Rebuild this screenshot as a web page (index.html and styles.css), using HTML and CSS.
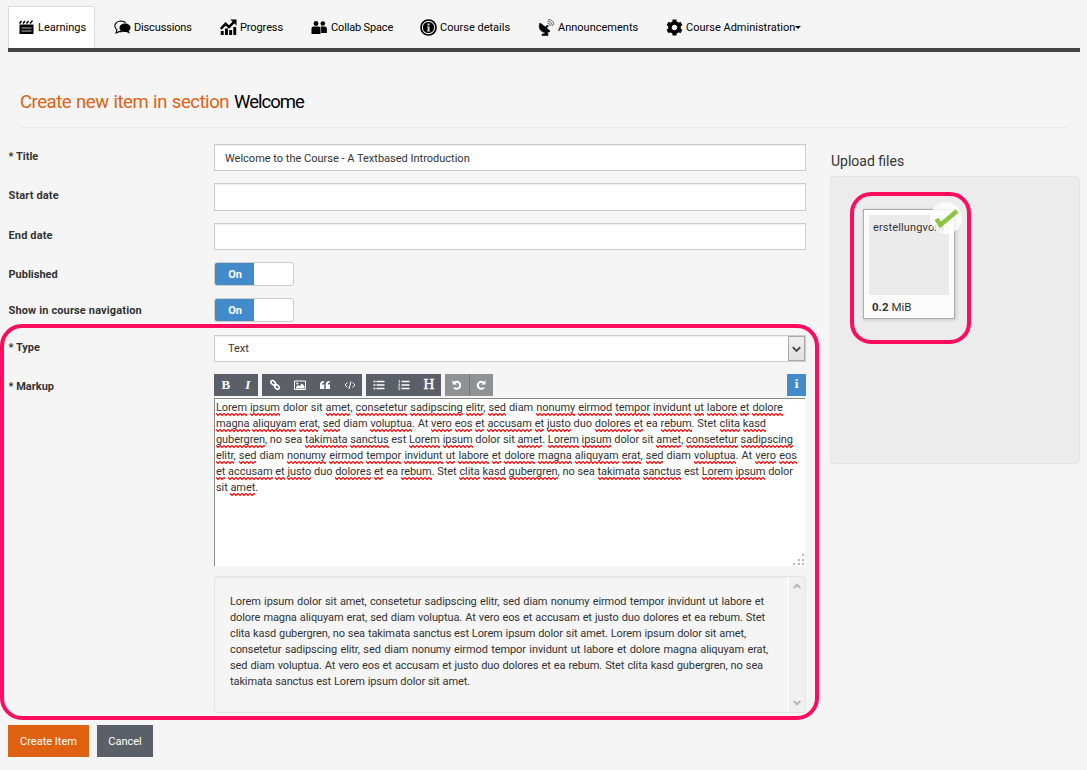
FILE: index.html
```html
<!DOCTYPE html>
<html lang="en">
<head>
<meta charset="utf-8">
<title>Create new item</title>
<link rel="stylesheet" href="styles.css">
</head>
<body>
<nav class="tabs">
  <a class="tab active"><svg class="ic" viewBox="0 0 17 17"><path d="M1.500 5.500h14v9.500h-14z"/><path d="M1.500 4.500l2-2.500M5 4.500l2-2.500M8.500 4.500l2-2.500M12 4.500l2.500-3" stroke="#000" stroke-width="1.500"/><path d="M3.500 9h10M3.500 12h10" stroke="#bbb"/></svg><span class="l1">Learnings</span></a>
  <a class="tab"><svg class="ic" viewBox="0 0 17 17"><path d="M8 12.500C6 13 4.500 12 3.500 13.500L2 14l1-3C-1 8 1 2.500 6.500 2 9 2 11 2.800 11.500 4" fill="none" stroke="#000" stroke-width="1.100"/><path d="M11 4.500c3 0 5.500 1.700 5.500 4.300 0 1.400-.7 2.500-1.800 3.200l1.300 2.700-3.500-1.700C8.500 13.500 5.500 12 5.500 9S8 4.500 11 4.500z"/></svg><span class="l2">Discussions</span></a>
  <a class="tab"><svg class="ic" viewBox="0 0 17 17"><path d="M.8 12h2.900v4H.8zM5 9.500h2.900V16H5zM9.200 11h2.900v5H9.200zM13.300 8h2.900v8h-2.900z"/><path d="M.8 10L5.500 4.800 9 8 14 2.800" fill="none" stroke="#000" stroke-width="2.500"/><path d="M10.300.5H16.500v6z"/></svg><span class="l3">Progress</span></a>
  <a class="tab"><svg class="ic" viewBox="0 0 17 17"><circle cx="5" cy="4.500" r="2.400"/><circle cx="11.800" cy="4.500" r="2.300"/><path d="M.5 15V9.500q0-2 2-2h5q2 0 2 2V15zM10.100 14V9q0-1-1-1.500h4.600q2.200 0 2.200 2.200V14z"/></svg><span class="l4">Collab Space</span></a>
  <a class="tab"><svg class="ic" viewBox="0 0 17 17"><circle cx="8.500" cy="8.500" r="7.500" fill="#fff" stroke="#000" stroke-width="1.700"/><circle cx="8.500" cy="8.500" r="5.700"/><path d="M7.500 4.500h2v2h-2zM7 7.500h2.500v4.200h.8v.9H6.800v-.9h.8V8.400H7z" fill="#ddd"/></svg><span class="l5">Course details</span></a>
  <a class="tab"><svg class="ic" viewBox="0 0 17 17"><path d="M2 4c-2 4 0 9 5 9.500L6.500 15H4v1.500h6V15L9 13.300q3 0 3-1.300L8.500 9l2-2-1-1-2 2z" stroke="#000" stroke-width=".6"/><path d="M9.500 4q2.500 0 3 3M9.500 2.200q4.200 0 5 5M10 .5q5.500 0 6 5.500" fill="none" stroke="#444" stroke-width=".8"/></svg><span class="l6">Announcements</span></a>
  <a class="tab"><svg class="ic" viewBox="0 0 17 17"><circle cx="8.500" cy="8.500" r="4.300" fill="none" stroke="#000" stroke-width="4.200"/><path d="M6.500.5h4v3h-4zM6.500 13.500h4v3h-4z" id="tooth"/><use href="#tooth" transform="rotate(60 8.500 8.500)"/><use href="#tooth" transform="rotate(120 8.500 8.500)"/><circle cx="8.500" cy="8.500" r="2.300" fill="none" stroke="#fff" stroke-width="1"/></svg><span class="l7">Course Administration</span><i class="caret"></i></a>
</nav>
<h1 class="heading"><span class="accent">Create new item in section</span><span class="sect">Welcome</span></h1>
<main class="page">
  <form class="form">
    <div class="row r-title"><label>* Title</label><div class="input"><span class="fit w-title">Welcome to the Course - A Textbased Introduction</span></div></div>
    <div class="row r-start"><label class="wide">Start date</label><div class="input"></div></div>
    <div class="row r-end"><label class="wide">End date</label><div class="input"></div></div>
    <div class="row r-toggle"><label>Published</label><div class="toggle"><b>On</b></div></div>
    <div class="row r-toggle"><label class="wide">Show in course navigation</label><div class="toggle"><b>On</b></div></div>
    <div class="row r-type"><label>* Type</label><div class="input select"><span>Text</span><i class="drop"><svg viewBox="0 0 16 24"><path d="M4 10.500l4 4 4-4" fill="none" stroke="#444" stroke-width="2"/></svg></i></div></div>
    <div class="row r-markup"><label>* Markup</label>
      <div class="editor">
        <div class="toolbar">
          <div class="group g1"><span class="glyph">B</span><span class="glyph it">I</span></div>
          <div class="group g2">
            <svg viewBox="0 0 12 12"><g fill="none" stroke="#fff" stroke-width="1.600"><rect x="1.500" y="2" width="5" height="3.400" rx="1.700" transform="rotate(42 4 4)"/><rect x="5.500" y="6.300" width="5" height="3.400" rx="1.700" transform="rotate(42 8 8)"/><path d="M5 5l2 2"/></g></svg>
            <svg viewBox="0 0 12 12"><path d="M.5 2h11v8.500H.5z" fill="none" stroke="#fff"/><circle cx="3.300" cy="4.500" r="1"/><path d="M2 9.500V8l2-2 1.300 1.200L8 4.500l2.500 2.500v2.500z"/></svg>
            <svg viewBox="0 0 12 12"><path d="M1 5.500Q1 2 5 2v1.500Q3 3.500 3 5.500h2.300V10H1zM6.700 5.500Q6.700 2 10.700 2v1.500Q8.700 3.500 8.700 5.500H11V10H6.700z"/></svg>
            <svg viewBox="0 0 12 12"><path d="M3.500 3.500L1 6l2.500 2.500M8.500 3.500L11 6 8.500 8.500M7 2.500l-2 7.500" fill="none" stroke="#fff"/></svg>
          </div>
          <div class="group g3">
            <svg viewBox="0 0 12 12"><path d="M.5 1.700h2v1.600h-2zM3.500 1.700h8v1.600h-8zM.5 5.200h2v1.600h-2zM3.500 5.200h8v1.600h-8zM.5 8.700h2v1.600h-2zM3.500 8.700h8v1.600h-8z"/></svg>
            <svg viewBox="0 0 12 12"><path d="M3.500 1.700h8v1.600h-8zM3.500 5.200h8v1.600h-8zM3.500 8.700h8v1.600h-8z"/><path d="M.5 1.500h1V4M.4 5h1.500L.5 7h1.600M.4 8.500h1.500l-1 1 1 1.200H.4" fill="none" stroke="#fff" stroke-width=".7"/></svg>
            <span class="glyph h">H</span>
          </div>
          <div class="group g4">
            <svg viewBox="0 0 12 12"><path d="M3.500 3.600A3.500 3.500 0 1 1 3 8.500" fill="none" stroke="#fff" stroke-width="1.900"/><path d="M1.500 1.200v4.300h4.300z"/></svg>
            <svg viewBox="0 0 12 12"><path d="M8.500 3.600A3.500 3.500 0 1 0 9 8.500" fill="none" stroke="#fff" stroke-width="1.900"/><path d="M10.500 1.200v4.300H6.200z"/></svg>
          </div>
          <div class="info">i</div>
        </div>
        <div class="area">
          <p class="fit a1"><u>Lorem</u> <u>ipsum</u> dolor sit <u>amet</u>, <u>consetetur</u> <u>sadipscing</u> <u>elitr</u>, <u>sed</u> diam <u>nonumy</u> <u>eirmod</u> <u>tempor</u> <u>invidunt</u> <u>ut</u> <u>labore</u> <u>et</u> <u>dolore</u></p>
          <p class="fit a2"><u>magna</u> <u>aliquyam</u> <u>erat</u>, <u>sed</u> diam <u>voluptua</u>. At <u>vero</u> <u>eos</u> <u>et</u> <u>accusam</u> <u>et</u> <u>justo</u> duo <u>dolores</u> <u>et</u> ea <u>rebum</u>. Stet <u>clita</u> <u>kasd</u></p>
          <p class="fit a3"><u>gubergren</u>, no sea <u>takimata</u> <u>sanctus</u> est <u>Lorem</u> <u>ipsum</u> dolor sit <u>amet</u>. <u>Lorem</u> <u>ipsum</u> dolor sit <u>amet</u>, <u>consetetur</u> <u>sadipscing</u></p>
          <p class="fit a4"><u>elitr</u>, <u>sed</u> diam <u>nonumy</u> <u>eirmod</u> <u>tempor</u> <u>invidunt</u> <u>ut</u> <u>labore</u> <u>et</u> <u>dolore</u> <u>magna</u> <u>aliquyam</u> <u>erat</u>, <u>sed</u> diam <u>voluptua</u>. At <u>vero</u> <u>eos</u></p>
          <p class="fit a5"><u>et</u> <u>accusam</u> <u>et</u> <u>justo</u> duo <u>dolores</u> <u>et</u> ea <u>rebum</u>. Stet <u>clita</u> <u>kasd</u> <u>gubergren</u>, no sea <u>takimata</u> <u>sanctus</u> est <u>Lorem</u> <u>ipsum</u> dolor</p>
          <p class="fit a6">sit <u>amet</u>.</p>
          <svg class="grip" viewBox="0 0 12 12"><path d="M9 0h2v2H9zM5 5h2v2H5zM9 5h2v2H9zM0 9h2v2H0zM5 9h2v2H5zM9 9h2v2H9z" fill="#b8b8b8"/></svg>
        </div>
        <div class="preview">
          <div class="copy">
            <p class="fit p1">Lorem ipsum dolor sit amet, consetetur sadipscing elitr, sed diam nonumy eirmod tempor invidunt ut labore et</p>
            <p class="fit p2">dolore magna aliquyam erat, sed diam voluptua. At vero eos et accusam et justo duo dolores et ea rebum. Stet</p>
            <p class="fit p3">clita kasd gubergren, no sea takimata sanctus est Lorem ipsum dolor sit amet. Lorem ipsum dolor sit amet,</p>
            <p class="fit p4">consetetur sadipscing elitr, sed diam nonumy eirmod tempor invidunt ut labore et dolore magna aliquyam erat,</p>
            <p class="fit p5">sed diam voluptua. At vero eos et accusam et justo duo dolores et ea rebum. Stet clita kasd gubergren, no sea</p>
            <p class="fit p6">takimata sanctus est Lorem ipsum dolor sit amet.</p>
          </div>
          <div class="scroll">
            <svg viewBox="0 0 8 8"><path d="M.7 6L4 2.700 7.300 6" fill="none" stroke="#b8b8b8" stroke-width="2"/></svg>
            <svg viewBox="0 0 8 8"><path d="M.7 2L4 5.300 7.300 2" fill="none" stroke="#b8b8b8" stroke-width="2"/></svg>
          </div>
        </div>
      </div>
    </div>
    <div class="actions"><button type="button" class="btn primary">Create Item</button><button type="button" class="btn cancel">Cancel</button></div>
  </form>
  <aside class="upload">
    <h2>Upload files</h2>
    <div class="well">
      <div class="thumb">
        <div class="details">erstellungvom</div>
        <div class="size"><b>0.2</b> MiB</div>
        <div class="done"><svg viewBox="0 0 32 32"><path d="M6.500 17l4 6L27 9" fill="none" stroke="#8bc53f" stroke-width="4.500"/></svg></div>
      </div>
    </div>
  </aside>
</main>
<div class="mark mark-form"></div>
<div class="mark mark-file"></div>
</body>
</html>
```
FILE: styles.css
```css
* { box-sizing: border-box; }
body { margin: 0; width: 1087px; height: 770px; overflow: hidden; position: relative; background: #f5f5f5; color: #333; font: 11px/16px Roboto, "Noto Sans", sans-serif; }
p, h1, h2 { margin: 0; font-weight: 400; }
.tabs { display: flex; margin: 6px 7px 0 8px; height: 46px; border-bottom: 4px solid #444; color: #000; }
.tab { display: flex; align-items: center; height: 42px; padding: 0 9px; margin-right: 10px; white-space: nowrap; }
.tab span { padding-top: 1px; }
.tab.active { background: #fff; border: 1px solid #ddd; border-bottom: 0; padding: 0 8px 0 9px; width: 87px; }
.ic { width: 17px; height: 17px; margin-right: 3px; flex: none; }
.l1 { width: 49px; } .l2 { width: 58px; letter-spacing: -.15px; } .l3 { width: 43px; letter-spacing: -.1px; } .l4 { width: 62px; letter-spacing: -.15px; } .l5 { width: 71px; } .l6 { width: 80px; } .l7 { width: 109px; }
.tab:nth-child(4), .tab:nth-child(5) { margin-right: 9px; }
.caret { border: 3.500px solid transparent; border-top-color: #000; border-bottom: 0; margin-left: 0; }
.heading { display: flex; gap: 5px; margin: 34px 19px 0 20px; height: 42px; border-bottom: 1px solid #eaeaea; font-size: 18.500px; line-height: 32px; }
.accent { width: 209px; color: #de6212; white-space: nowrap; text-align-last: justify; letter-spacing: -.45px; }
.sect { color: #000; letter-spacing: -1px; }
.page { display: grid; grid-template-columns: 798px 250px; gap: 24px; padding: 16px 0 0 8px; }
.row { display: grid; grid-template-columns: 206px 592px; }
label { font-weight: 700; line-height: 16px; padding: 5px 0 0 .5px; }
.wide { letter-spacing: .14px; }
.r-title { height: 39px; } .r-start { height: 40px; } .r-end { height: 39px; } .r-toggle { height: 36px; } .r-type { height: 39px; margin-top: 1px; }
.input { height: 27px; border: 1px solid #ccc; background: #fff; box-shadow: inset 0 1px 1px rgba(0,0,0,.06); padding: 6px 10px 0; }
.r-start .input { height: 28px; }
.fit { white-space: nowrap; text-align-last: justify; }
span.fit { display: block; }
.w-title { width: 244px; }
.toggle { width: 80px; height: 24px; border: 1px solid #ccc; border-radius: 3px; background: #fff; overflow: hidden; }
.toggle b { display: block; width: 39px; height: 22px; background: #428bca; color: #fff; line-height: 23px; text-align: center; padding-left: 1px; }
.select { display: flex; justify-content: space-between; padding: 0 0 0 13px; line-height: 26px; }
.drop { width: 17px; height: 25px; border: 1px solid #aaa; background: linear-gradient(#f0f0f0, #e2e2e2); }
.drop svg { display: block; width: 15px; height: 23px; }
.toolbar { display: flex; gap: 4px; height: 22px; }
.group { display: flex; align-items: center; justify-content: space-around; height: 22px; background: #5b5f67; }
.g1 { width: 44px; } .g2 { width: 100px; } .g3 { width: 75px; }
.g4 { width: 48px; background: linear-gradient(90deg, #8f9295 24px, #707377 24px, #707377 25px, #8f9295 25px); }
.group svg { width: 12px; height: 12px; fill: #fff; }
.glyph { font: bold 13px/22px "Liberation Serif", serif; color: #fff; }
.it { font-style: italic; } .h { font-size: 15px; font-weight: 400; padding-bottom: 2px; -webkit-text-stroke: .4px #fff; }
.info { width: 19px; height: 22px; margin-left: auto; background: #428bca; color: #fff; text-align: center; font: bold 11px/22px "DejaVu Serif", serif; }
.area { position: relative; margin-top: 2px; width: 591px; height: 168px; border: 1px solid #888; border-right: 0; border-bottom: 0; background: #fff; padding: 1px 0 0 1px; letter-spacing: -.07px; }
.area u { text-decoration: none; padding-bottom: 2px; background: url("data:image/svg+xml,%3Csvg xmlns='http://www.w3.org/2000/svg' width='4' height='3'%3E%3Cpath d='M-1 1.500L0 .5L2 2.500L4 .5L5 1.500' fill='none' stroke='red' stroke-width='1.150'/%3E%3C/svg%3E") repeat-x left bottom / 4px 3px; }
.a1 { width: 567px; } .a2 { width: 550px; } .a3 { width: 577px; } .a4 { width: 581px; } .a5 { width: 577px; } .a6 { width: 42px; }
.grip { position: absolute; right: 0; bottom: 0; width: 12px; height: 12px; }
.preview { display: flex; justify-content: space-between; margin-top: 10px; height: 137px; border: 1px solid #e4e4e4; border-radius: 3px; box-shadow: inset 0 1px 1px rgba(0,0,0,.05); }
.copy { padding: 17px 0 0 15px; letter-spacing: -.1px; }
.p1 { width: 534px; } .p2 { width: 535px; } .p3 { width: 516px; } .p4 { width: 538px; } .p5 { width: 533px; } .p6 { width: 240px; }
.scroll { width: 17px; display: flex; flex-direction: column; justify-content: space-between; align-items: center; padding: 5px 0; background: #f0f0f0; border-left: 1px solid #fff; }
.scroll svg { width: 8px; height: 8px; }
.actions { display: flex; gap: 8px; margin-top: 12px; }
.btn { height: 32px; border: 0; padding: 2px 0 0; color: #fff; font: inherit; }
.primary { width: 81px; background: #de6212; } .cancel { width: 56px; background: #5b5f67; }
.upload h2 { font-size: 14px; line-height: 20px; padding: 7px 0 0 1px; }
.well { margin-top: 5px; height: 288px; border: 1px solid #e3e3e3; border-radius: 3px; background: #ececec; padding: 32px; }
.thumb { position: relative; width: 92px; height: 110px; border: 1px solid #acacac; background: #fcfcfc; padding: 5px; box-shadow: 1px 1px 4px rgba(0,0,0,.16); }
.details { width: 80px; height: 80px; background: #ebebeb; padding: 5px 4px; overflow: hidden; letter-spacing: .12px; }
.size { padding: 4px 3px; white-space: nowrap; font-size: 11.500px; }
.done { position: absolute; left: 66px; top: -8px; width: 32px; height: 32px; border-radius: 50%; background: rgba(255,255,255,.8); }
.done svg { display: block; width: 32px; height: 32px; }
.mark { position: absolute; border: 4px solid #ff0d5d; pointer-events: none; }
.mark-form { left: 0; top: 324px; width: 819px; height: 396px; border-radius: 22px; }
.mark-file { left: 850px; top: 192px; width: 121px; height: 152px; border-radius: 21px; }
```
